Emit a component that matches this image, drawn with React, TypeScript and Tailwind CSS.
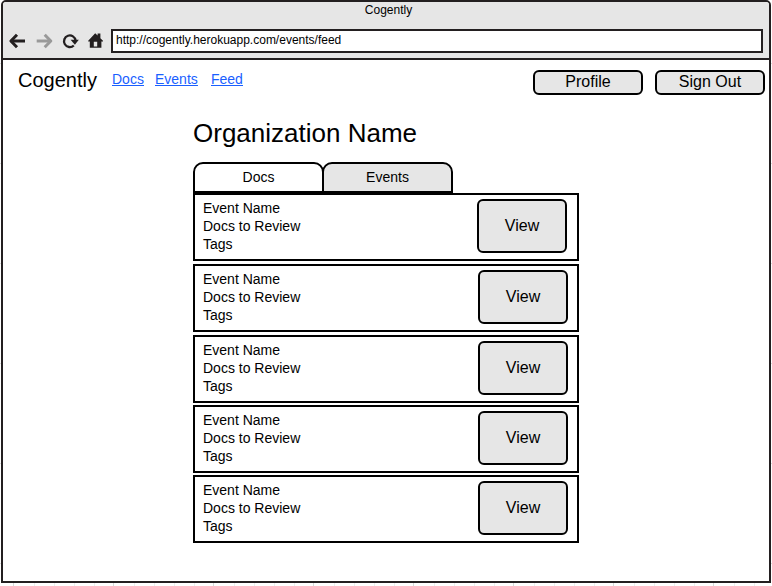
type EventItem = { name: string; gap: string; inset: string };

const events: EventItem[] = [
  { name: "Event Name", gap: "", inset: "mr-[10px]" },
  { name: "Event Name", gap: "mt-[3px]", inset: "mr-[9px]" },
  { name: "Event Name", gap: "mt-[3px]", inset: "mr-[9px]" },
  { name: "Event Name", gap: "mt-[2px]", inset: "mr-[9px]" },
  { name: "Event Name", gap: "mt-[2px]", inset: "mr-[9px]" },
];

const majorTicks = [13, 113, 213, 313, 413, 513, 613, 713];
const minorTicks = majorTicks.flatMap((x) => [x + 21, x + 41, x + 61, x + 81]).filter((x) => x < 772);
const sideTicks = [63, 163, 263, 363, 463, 563];

function CanvasGrid() {
  return (
    <svg className="absolute inset-0" width="772" height="586" shapeRendering="crispEdges">
      {minorTicks.map((x) => (
        <rect key={x} x={x} y="583" width="1" height="3" fill="#eeeeee" />
      ))}
      {majorTicks.map((x) => (
        <rect key={x} x={x} y="583" width="1" height="3" fill="#d8d8d8" />
      ))}
      {sideTicks.map((y) => (
        <g key={y} fill="#dedede">
          <rect x="0" y={y} width="1" height="1" />
          <rect x="771" y={y} width="1" height="1" />
        </g>
      ))}
    </svg>
  );
}

function ToolbarIcons() {
  return (
    <svg width="104" height="26" viewBox="0 0 104 26" fill="none" className="block shrink-0">
      <g stroke="#231f20" strokeWidth="3" strokeLinejoin="round">
        <path d="M21 13H7.5" />
        <path d="M13 6.8L6.9 13L13 19.2" />
      </g>
      <g stroke="#999999" strokeWidth="3" strokeLinejoin="round">
        <path d="M32.7 13H46.2" />
        <path d="M40.7 6.8L46.8 13L40.7 19.2" />
      </g>
      <path d="M69.8 17.5A5.8 5.8 0 1 1 71.6 12.6" stroke="#231f20" strokeWidth="2.3" />
      <path d="M66.6 11.7H74.8L70.9 16.7Z" fill="#231f20" />
      <path
        fillRule="evenodd"
        fill="#231f20"
        d="M91.2 5.2L93.6 7.6V5.6H96.4V10.2L99 12.8V13.4H97.4V19.8H85.8V13.4H84.2V12.8ZM89.8 13.8V18.6H93.2V13.8Z"
      />
    </svg>
  );
}

function HeaderButton({ label }: { label: string }) {
  return (
    <button className="flex h-[25px] w-[110px] items-start justify-center rounded-[6px] border-2 border-black bg-[#e6e6e6] text-base leading-[19px]">
      {label}
    </button>
  );
}

function EventRow({ event }: { event: EventItem }) {
  return (
    <li className={`flex h-[68px] items-start justify-between border-2 border-black bg-white ${event.gap}`}>
      <div className="pt-1 pl-2 text-sm leading-[18px]">
        <p>{event.name}</p>
        <p>Docs to Review</p>
        <p>Tags</p>
      </div>
      <button
        className={`mt-1 h-[54px] w-[90px] rounded-[6px] border-2 border-black bg-[#e6e6e6] text-base leading-[20px] ${event.inset}`}
      >
        View
      </button>
    </li>
  );
}

export default function App() {
  return (
    <div className="relative h-[586px] w-[772px] overflow-hidden bg-white pl-px font-['Liberation_Sans',Arial,sans-serif] text-black">
      <CanvasGrid />
      <div className="relative h-[583px] w-[770px] overflow-hidden rounded-t-[5px] border-2 border-[#231f20] bg-white">
        <div className="h-[58px] border-b-2 border-[#231f20] bg-[#e6e6e6]">
          <div className="h-[27px] pt-px text-center text-xs leading-[14px]">
            <span className="pl-[5px]">Cogently</span>
          </div>
          <div className="flex">
            <div className="-mt-px h-[26px] w-[108px] pl-px">
              <ToolbarIcons />
            </div>
            <div className="h-[24px] w-[652px] border-2 border-[#231f20] bg-white pl-[3px] text-xs leading-[18px]">
              http://cogently.herokuapp.com/events/feed
            </div>
          </div>
        </div>

        <header className="flex h-[49px] items-start pt-[10px] pl-[15px]">
          <h1 className="w-[94px] text-xl leading-[21px]">Cogently</h1>
          <nav className="flex flex-1 text-sm leading-[18px] text-[#1a5fff] underline">
            <a className="w-[43px]">Docs</a>
            <a className="w-[56px]">Events</a>
            <a>Feed</a>
          </nav>
          <div className="flex gap-3 pr-1">
            <HeaderButton label="Profile" />
            <HeaderButton label="Sign Out" />
          </div>
        </header>

        <main className="ml-[190px] w-[386px]">
          <h2 className="h-[53px] pt-[9px] text-[26px] leading-[30px]">Organization Name</h2>
          <div className="flex h-[31px] text-sm leading-[27px]">
            <div className="w-[131px] rounded-t-[10px] border-2 border-black bg-white text-center">Docs</div>
            <div className="-ml-[2px] w-[131px] rounded-t-[10px] border-2 border-black bg-[#e6e6e6] text-center">
              Events
            </div>
          </div>
          <ul>
            {events.map((event, index) => (
              <EventRow key={index} event={event} />
            ))}
          </ul>
        </main>
      </div>
    </div>
  );
}
